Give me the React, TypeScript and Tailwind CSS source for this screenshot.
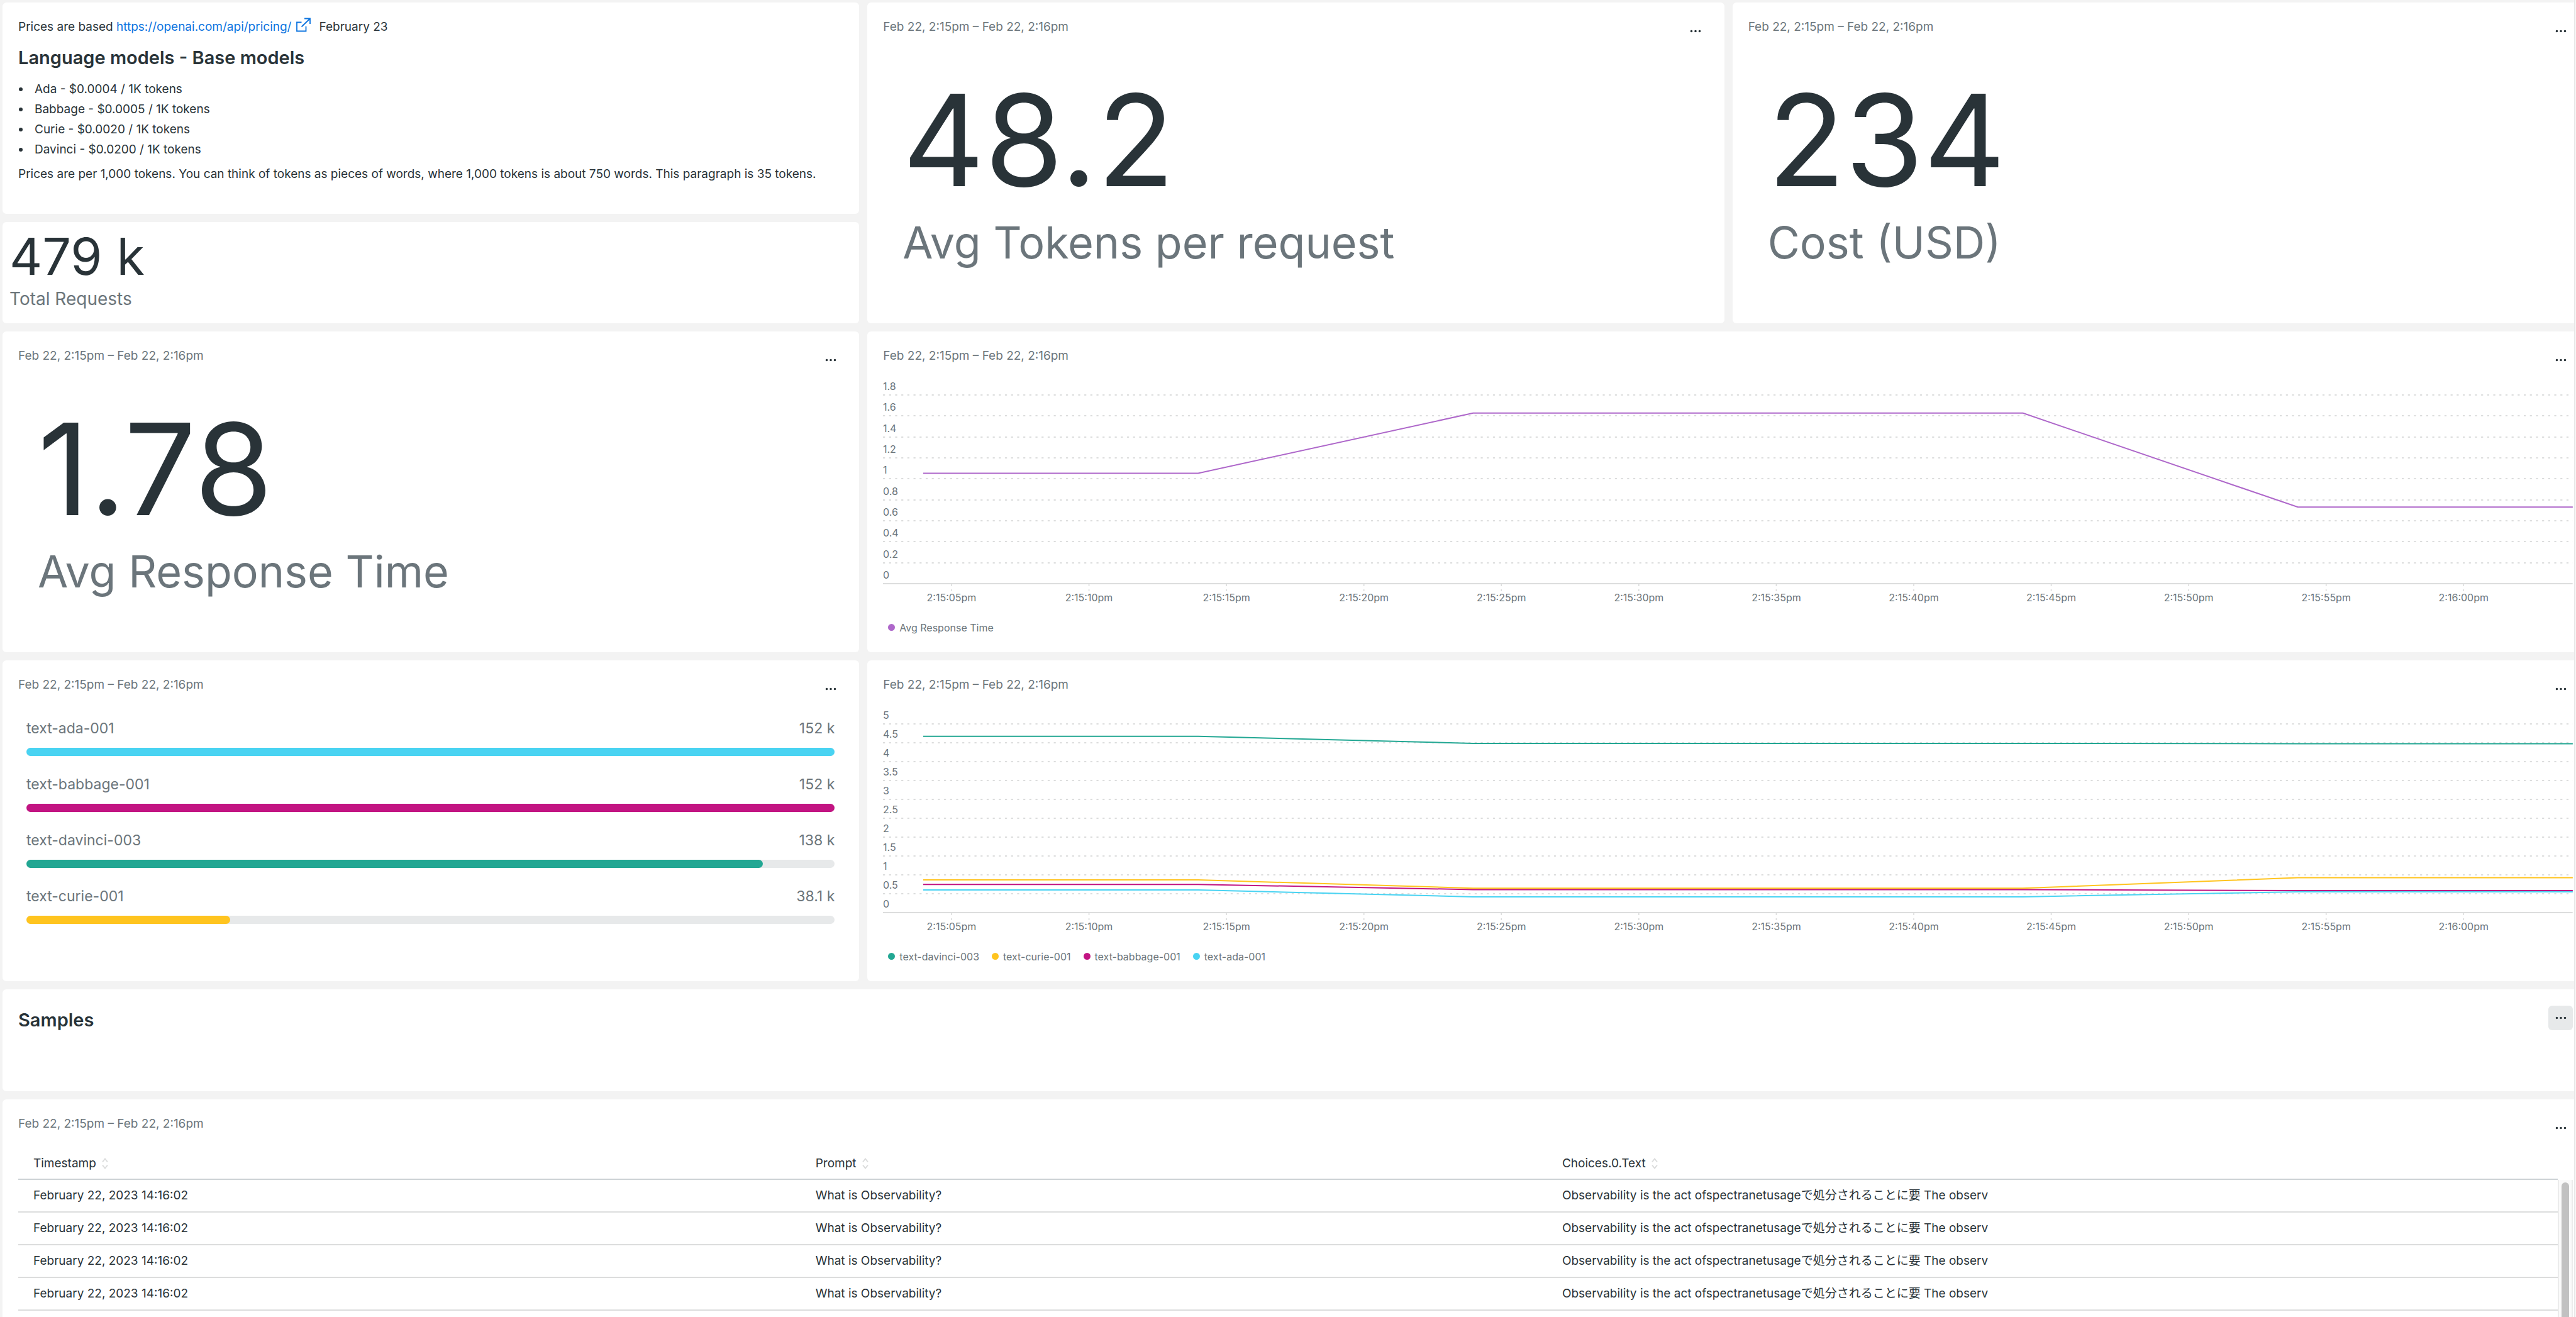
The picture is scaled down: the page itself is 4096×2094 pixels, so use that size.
import React from "react";

const RANGE = "Feb 22, 2:15pm – Feb 22, 2:16pm";

function MenuButton({ active = false }: { active?: boolean }) {
  return (
    <button
      type="button"
      aria-label="Widget options"
      className={
        active
          ? "flex h-[39px] w-[39px] items-center justify-center rounded-md bg-[#e7e9ea]"
          : "flex h-[39px] w-[39px] items-center justify-center rounded-md"
      }
    >
      <svg width="18" height="6" viewBox="0 0 18 6" fill="#293338" aria-hidden="true">
        <circle cx="2.5" cy="2.5" r="1.8" />
        <circle cx="9" cy="2.5" r="1.8" />
        <circle cx="15.5" cy="2.5" r="1.8" />
      </svg>
    </button>
  );
}

function Header() {
  return (
    <header className="flex items-start justify-between">
      <span className="text-[19px] leading-[26px] text-[#6b757b]">{RANGE}</span>
      <MenuButton />
    </header>
  );
}

function Card({ className = "", children }: { className?: string; children: React.ReactNode }) {
  return <section className={"rounded-md bg-white " + className}>{children}</section>;
}

function Billboard({ value, label }: { value: string; label: string }) {
  return (
    <Card className="h-[510px] p-[26px] pl-[25px]">
      <Header />
      <div className="mt-[53px] pl-[31px]">
        <p className="text-[202px] leading-none text-[#293338]">{value}</p>
        <p className="mt-5 text-[70px] leading-[84px] text-[#6b757b]">{label}</p>
      </div>
    </Card>
  );
}

const bars = [
  { name: "text-ada-001", value: "152 k", pct: 100, color: "#49d3f2" },
  { name: "text-babbage-001", value: "152 k", pct: 100, color: "#c21482" },
  { name: "text-davinci-003", value: "138 k", pct: 91.1, color: "#22a793" },
  { name: "text-curie-001", value: "38.1 k", pct: 25.2, color: "#ffc41f" },
];

type Series = { name: string; color: string; ys: number[] };

const TOP = 36;
const BOTTOM = 336;
const times = ["2:15:05pm", "2:15:10pm", "2:15:15pm", "2:15:20pm", "2:15:25pm", "2:15:30pm", "2:15:35pm", "2:15:40pm", "2:15:45pm", "2:15:50pm", "2:15:55pm", "2:16:00pm"];

function LineChart({ title, ticks, max, series }: { title: string; ticks: string[]; max: number; series: Series[] }) {
  const step = (BOTTOM - TOP) / (ticks.length - 1);
  return (
    <Card className="col-span-2 h-[510px] p-[26px] pl-[25px]">
      <Header />
      <svg viewBox="0 0 2687 378" className="block w-full" role="img" aria-label={title}>
        {ticks.map((t, i) => {
          const y = Math.round(TOP + i * step);
          const last = i === ticks.length - 1;
          return (
            <g key={t}>
              <line x1="0" x2="2687" y1={y} y2={y} stroke="#dcdddd" strokeWidth="2" strokeDasharray={last ? undefined : "3.2 6.5"} />
              <text x="0" y={y - 8} fontSize="16" fill="#6b757b">
                {t}
              </text>
            </g>
          );
        })}
        {times.map((t, i) => {
          const x = 109 + i * 218.6;
          return (
            <g key={t}>
              <path d={`M${x} 337v3M${x} 345v3`} stroke="#dcdddd" strokeWidth="1.6" />
              <text x={x} y="364" fontSize="16" fill="#6b757b" textAnchor="middle">
                {t}
              </text>
            </g>
          );
        })}
        {series.map((s) => (
          <polyline
            key={s.name}
            fill="none"
            stroke={s.color}
            strokeWidth="2"
            points={s.ys.map((v, i) => `${64 + i * 437.2},${BOTTOM - (v / max) * (BOTTOM - TOP)}`).join(" ")}
          />
        ))}
      </svg>
      <ul className="mt-4 flex gap-5 pl-2">
        {series.map((s) => (
          <li key={s.name} className="flex items-center gap-[7px] text-[16px] leading-6 text-[#6b757b]">
            <span className="h-[11px] w-[11px] rounded-full" style={{ backgroundColor: s.color }} />
            {s.name}
          </li>
        ))}
      </ul>
    </Card>
  );
}

function SortIcon() {
  return (
    <svg width="12" height="18" viewBox="0 0 12 18" fill="none" stroke="#dcdddd" strokeWidth="2" aria-hidden="true">
      <path d="M2 6.5 6 1.5 10 6.5M2 11.5 6 16.5 10 11.5" />
    </svg>
  );
}

const prices = [
  "Ada - $0.0004 / 1K tokens",
  "Babbage - $0.0005 / 1K tokens",
  "Curie - $0.0020 / 1K tokens",
  "Davinci - $0.0200 / 1K tokens",
];

const responseTime: Series[] = [
  { name: "Avg Response Time", color: "#ae67ca", ys: [1.053, 1.053, 1.627, 1.627, 1.627, 0.73, 0.73] },
];

const byModel: Series[] = [
  { name: "text-davinci-003", color: "#22a793", ys: [4.672, 4.672, 4.485, 4.485, 4.485, 4.476, 4.476] },
  { name: "text-curie-001", color: "#ffc41f", ys: [0.866, 0.866, 0.645, 0.645, 0.645, 0.923, 0.923] },
  { name: "text-babbage-001", color: "#c21482", ys: [0.746, 0.746, 0.609, 0.609, 0.609, 0.582, 0.582] },
  { name: "text-ada-001", color: "#49d3f2", ys: [0.6, 0.6, 0.417, 0.417, 0.417, 0.551, 0.551] },
];

const rows = [0, 1, 2, 3].map(() => ({
  time: "February 22, 2023 14:16:02",
  prompt: "What is Observability?",
  text: "Observability is the act ofspectranetusageで処分されることに要 The observ",
}));

export default function App() {
  return (
    <div className="flex h-screen overflow-hidden bg-[#fafafa] pr-px font-['Inter','Noto_Sans_CJK_JP',sans-serif] text-[#293338]">
      <main className="min-w-0 flex-1 overflow-hidden border-r-2 border-[#e8e8e8] bg-[#f3f3f3]">
        <div className="-mr-6 grid grid-cols-3 gap-[13px] pl-1 pt-1">
          <div className="flex flex-col gap-[13px]">
            <Card className="h-[336px] px-[25px] pt-[23px] text-[19px] leading-8">
              <p>
                Prices are based{" "}
                <a href="https://openai.com/api/pricing/" className="text-[#0c74df]">
                  https://openai.com/api/pricing/
                  <svg width="24" height="24" viewBox="0 0 24 24" fill="none" stroke="currentColor" strokeWidth="1.8" className="ml-2 mr-3 inline-block align-[-3px]" aria-hidden="true">
                    <path d="M8.5 7.5H1v14h14.5v-7.5M8.5 14.5 22 1.5M13 1.5h9v8.5" />
                  </svg>
                </a>
                February 23
              </p>
              <h2 className="mt-[15px] text-[29px] font-semibold leading-9">Language models - Base models</h2>
              <ul className="mt-4">
                {prices.map((p) => (
                  <li key={p} className="flex items-center gap-[19px] pl-px">
                    <span className="h-[6px] w-[6px] rounded-full bg-[#293338]" />
                    {p}
                  </li>
                ))}
              </ul>
              <p className="mt-[7px]">
                Prices are per 1,000 tokens. You can think of tokens as pieces of words, where 1,000 tokens is about 750 words. This paragraph is 35 tokens.
              </p>
            </Card>
            <Card className="h-[161px] px-[11px] pt-[15px]">
              <p className="text-[81px] leading-none">479 k</p>
              <p className="mt-[9px] text-[28px] leading-[34px] text-[#6b757b]">Total Requests</p>
            </Card>
          </div>
          <Billboard value="48.2" label="Avg Tokens per request" />
          <Billboard value="234" label="Cost (USD)" />

          <Billboard value="1.78" label="Avg Response Time" />
          <LineChart title="Average response time" max={1.8} ticks={["1.8", "1.6", "1.4", "1.2", "1", "0.8", "0.6", "0.4", "0.2", "0"]} series={responseTime} />

          <Card className="h-[510px] p-[26px] pl-[25px]">
            <Header />
            <ul className="mt-[29px] flex flex-col gap-[31px] px-[13px]">
              {bars.map((b) => (
                <li key={b.name}>
                  <div className="flex justify-between text-[23px] leading-7 text-[#6b757b]">
                    <span>{b.name}</span>
                    <span>{b.value}</span>
                  </div>
                  <div className="mt-[17px] h-[13px] rounded-full bg-[#e7e9ea]">
                    <div className="h-full rounded-full" style={{ width: `${b.pct}%`, backgroundColor: b.color }} />
                  </div>
                </li>
              ))}
            </ul>
          </Card>
          <LineChart title="Response time by model" max={5} ticks={["5", "4.5", "4", "3.5", "3", "2.5", "2", "1.5", "1", "0.5", "0"]} series={byModel} />

          <Card className="col-span-3 flex h-[162px] items-start justify-between p-[26px] pl-[25px]">
            <h2 className="text-[29px] font-semibold leading-[46px]">Samples</h2>
            <MenuButton active />
          </Card>

          <Card className="col-span-3 h-[510px] p-[26px] pl-[25px]">
            <Header />
            <div className="flex items-start">
              <table className="flex-1 table-fixed border-collapse text-left text-[19px] leading-6">
                <colgroup>
                  <col className="w-[30.8%]" />
                  <col className="w-[29.4%]" />
                  <col />
                </colgroup>
                <thead>
                  <tr className="h-[62px] border-b-2 border-[#cdd2d5]">
                    {["Timestamp", "Prompt", "Choices.0.Text"].map((h) => (
                      <th key={h} scope="col" className="px-6 pt-3 font-normal">
                        <button type="button" className="flex items-center gap-2">
                          {h}
                          <SortIcon />
                        </button>
                      </th>
                    ))}
                  </tr>
                </thead>
                <tbody>
                  {rows.map((r, i) => (
                    <tr key={i} className="h-[52px] border-b-2 border-[#dcdddd]">
                      <td className="px-6">{r.time}</td>
                      <td className="px-6">{r.prompt}</td>
                      <td className="px-6">{r.text}</td>
                    </tr>
                  ))}
                </tbody>
              </table>
              <div className="mt-[63px] h-[360px] w-6 border-x-2 border-[#ececec] bg-[#fafafa] px-1 pt-1">
                <div className="h-full rounded-full bg-[#c1c1c1]" />
              </div>
            </div>
          </Card>
        </div>
      </main>
    </div>
  );
}
